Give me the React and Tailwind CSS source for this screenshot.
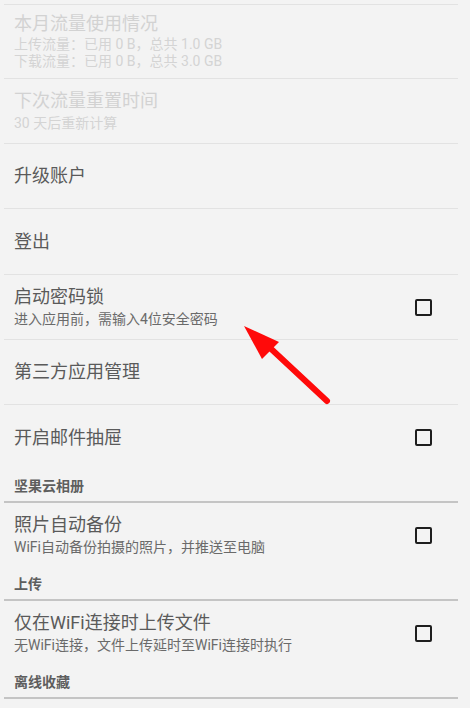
import React from "react";

const font = { fontFamily: 'Roboto, "Noto Sans CJK SC", sans-serif' };

const Checkbox = () => (
  <div className="w-[17px] h-[17px] border-2 border-[#1e1e1e] rounded-[2px] bg-transparent" />
);

const Row = ({ title, lines = [], disabled, checkbox, h = "h-[65px]", border = true }) => (
  <div className={`${h} flex items-center pl-[10px] pr-[26px] ${border ? "border-b border-[#e2e2e2]" : ""}`}>
    <div className="flex-1">
      <div className={`text-[18px] leading-[22px] ${disabled ? "text-[#d2d2d2]" : "text-[#5a5a5a]"}`}>{title}</div>
      {lines.length > 0 && (
        <div className={`mt-[1px] ${disabled ? "text-[#d4d4d4]" : "text-[#6a6a6a]"} text-[14px] ${lines.length > 1 ? "leading-[17px]" : "leading-[20px]"}`}>
          {lines.map((l) => (
            <div key={l}>{l}</div>
          ))}
        </div>
      )}
    </div>
    {checkbox && <Checkbox />}
  </div>
);

const Category = ({ title }) => (
  <div className="h-[33px] flex items-center pt-[2px] pl-[10px] border-b-2 border-[#c4c4c4]">
    <span className="text-[14px] font-bold text-[#5e5e5e]">{title}</span>
  </div>
);

export default function App() {
  return (
    <div className="relative w-[470px] h-[708px] overflow-hidden bg-[#f3f3f3]" style={font}>
      <div className="ml-[4px] mr-[12px] pt-[4px]">
        <div className="h-px bg-[#e2e2e2]" />
        <Row title="本月流量使用情况" lines={["上传流量：已用 0 B，总共 1.0 GB", "下载流量：已用 0 B，总共 3.0 GB"]} disabled h="h-[74px]" />
        <Row title="下次流量重置时间" lines={["30 天后重新计算"]} disabled />
        <Row title="升级账户" />
        <Row title="登出" h="h-[66px]" />
        <Row title="启动密码锁" lines={["进入应用前，需输入4位安全密码"]} checkbox />
        <Row title="第三方应用管理" />
        <Row title="开启邮件抽屉" checkbox border={false} />
        <Category title="坚果云相册" />
        <Row title="照片自动备份" lines={["WiFi自动备份拍摄的照片，并推送至电脑"]} checkbox border={false} />
        <Category title="上传" />
        <Row title="仅在WiFi连接时上传文件" lines={["无WiFi连接，文件上传延时至WiFi连接时执行"]} checkbox border={false} />
        <Category title="离线收藏" />
      </div>
      <svg className="absolute left-0 top-0 pointer-events-none" width="470" height="708">
        <line x1="327" y1="401" x2="268" y2="346" stroke="#ff0a0a" strokeWidth="6" strokeLinecap="round" />
        <polygon points="244,326 279,342 262,359" fill="#ff0a0a" />
      </svg>
    </div>
  );
}
